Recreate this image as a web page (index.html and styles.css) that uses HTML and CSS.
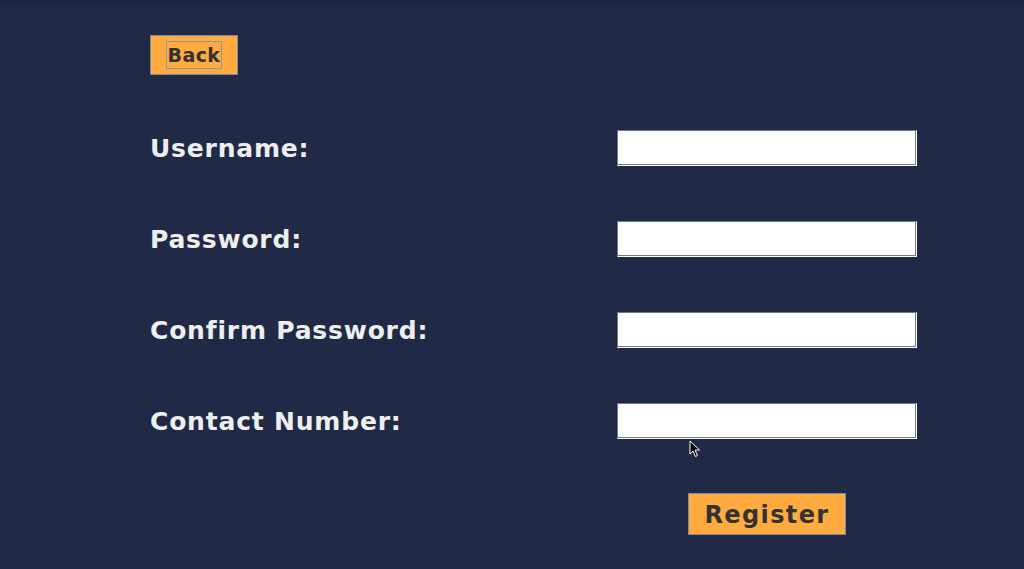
FILE: index.html
```html
<!DOCTYPE html>
<html>
<head>
<meta charset="utf-8">
<link rel="stylesheet" href="styles.css">
</head>
<body>
<div class="page">
  <div class="top">
    <button class="btn back"><span class="focus">Back</span></button>
  </div>
  <div class="form">
    <label class="lbl">Username:</label>
    <div class="entry"></div>
    <label class="lbl">Password:</label>
    <div class="entry"></div>
    <label class="lbl">Confirm Password:</label>
    <div class="entry"></div>
    <label class="lbl">Contact Number:</label>
    <div class="entry"></div>
  </div>
  <div class="actions">
    <button class="btn register">Register</button>
  </div>
  <svg class="cursor" width="12" height="18" viewBox="0 0 12 18">
    <path d="M1 1 L1 14 L4 11 L6.5 16.5 L8.5 15.5 L6 10 L10.5 10 Z" fill="#000" stroke="#fff" stroke-width="1"/>
  </svg>
</div>
</body>
</html>
```

FILE: styles.css
```css
html, body {
  margin: 0;
  padding: 0;
  width: 1024px;
  height: 569px;
  overflow: hidden;
}
body {
  background: linear-gradient(#1b2340 0px, #202a46 8px, #202a46 100%);
  font-family: "DejaVu Sans", sans-serif;
}
.page {
  position: relative;
  width: 1024px;
  height: 569px;
  padding-left: 150px;
  box-sizing: border-box;
}
.top {
  padding-top: 35px;
  height: 40px;
}
.btn {
  background: #ffab40;
  border: 1px solid #7e8aa0;
  color: #333333;
  font-family: "DejaVu Sans", sans-serif;
  font-weight: bold;
  padding: 0;
  margin: 0;
  box-sizing: border-box;
  display: flex;
  align-items: center;
  justify-content: center;
}
.back {
  width: 88px;
  height: 40px;
  font-size: 19px;
  letter-spacing: 0.4px;
}
.focus {
  border: 1px solid #8b97ab;
  width: 56px;
  height: 28px;
  box-sizing: border-box;
  display: flex;
  align-items: center;
  justify-content: center;
}
.form {
  margin-top: 55px;
  display: grid;
  grid-template-columns: 467px 300px;
  grid-auto-rows: 36px;
  row-gap: 55px;
  align-items: center;
}
.lbl {
  color: #eeeeee;
  font-weight: bold;
  font-size: 25px;
  letter-spacing: 0.8px;
  line-height: 36px;
  padding-top: 1px;
}
.entry {
  height: 36px;
  background: #ffffff;
  box-sizing: border-box;
  border: 1px solid;
  border-color: #6c7a90 #ffffff #ffffff #6c7a90;
  box-shadow: inset -1px -1px 0 0 #6c7a90, inset 1px 1px 0 0 #ffffff;
}
.actions {
  margin-top: 54px;
  padding-left: 538px;
}
.register {
  width: 158px;
  height: 42px;
  font-size: 24px;
  letter-spacing: 1.4px;
  padding-top: 1px;
}
.cursor {
  position: absolute;
  left: 689px;
  top: 440px;
}
```
